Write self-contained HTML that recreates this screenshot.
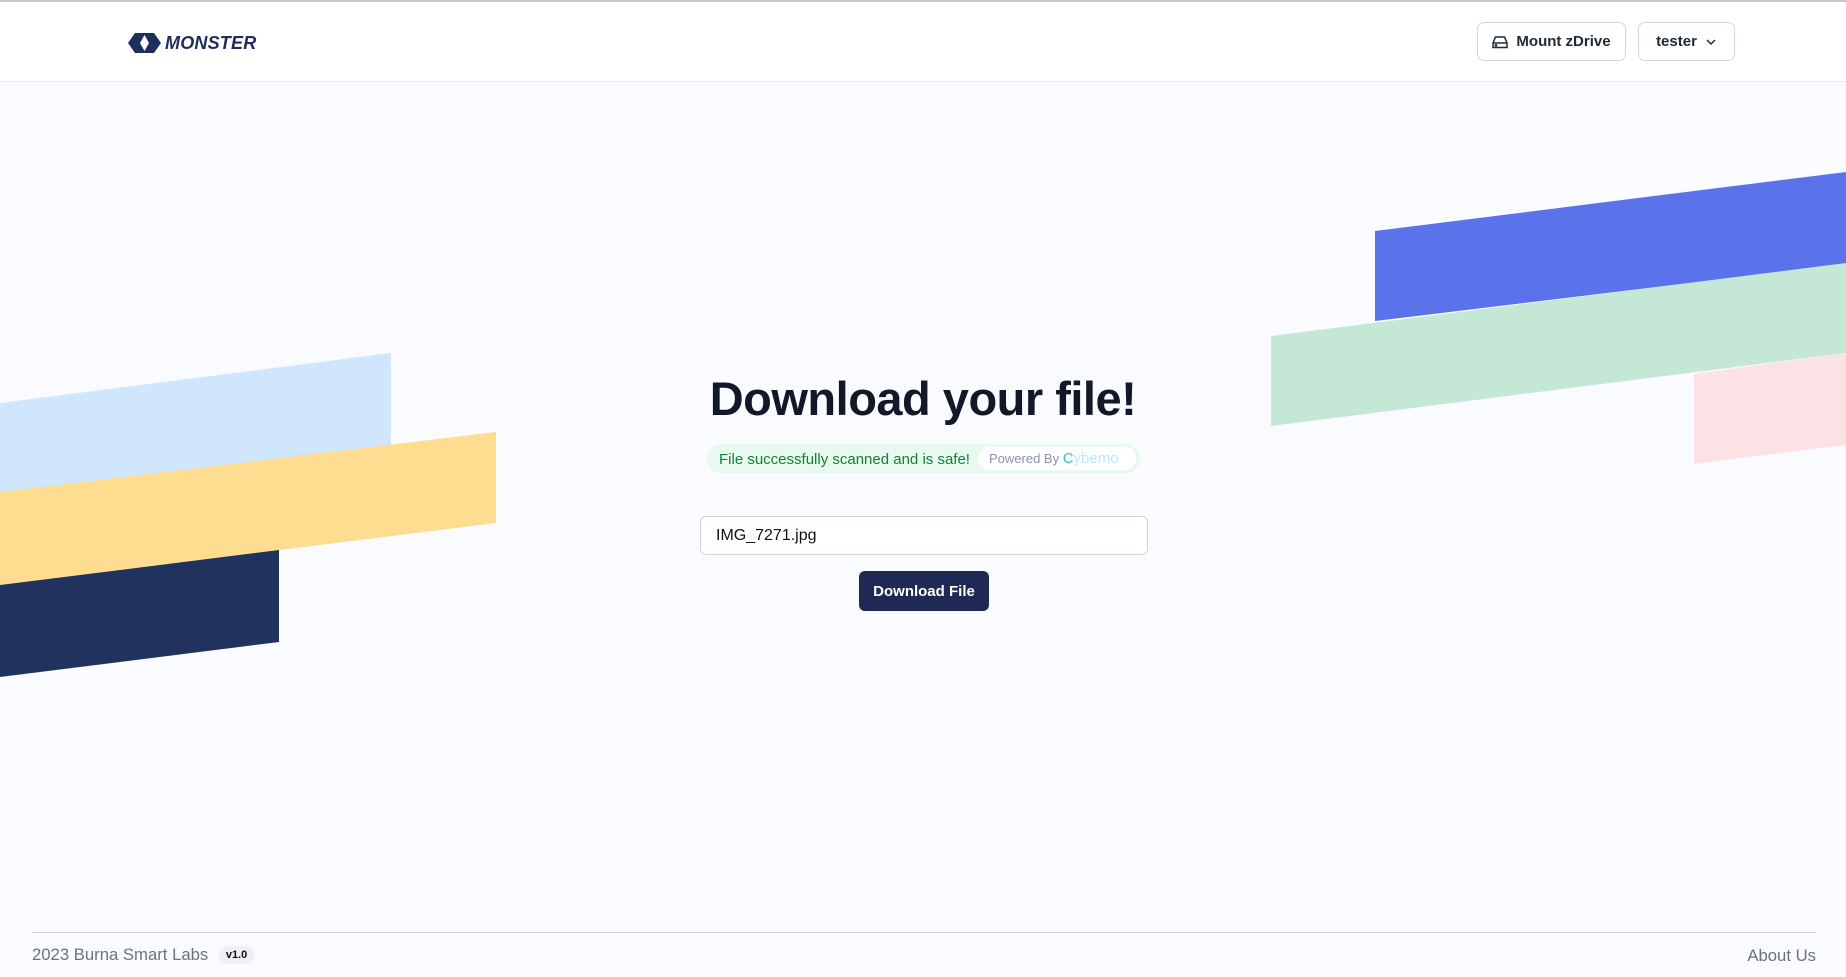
<!DOCTYPE html>
<html><head><meta charset="utf-8"><style>
body{margin:0;width:1846px;height:977px;background:#fafbfe;font-family:"Liberation Sans",sans-serif;position:relative;overflow:hidden}
.top{position:absolute;left:0;top:0;width:1846px;height:82px;background:#fff;border-top:2px solid #c8c8c8;border-bottom:1px solid #eceef3;box-sizing:border-box}
.btn{position:absolute;top:20px;height:39px;border:1px solid #d3d6de;border-radius:7px;background:#fff;box-sizing:border-box;font-weight:bold;font-size:15px;color:#1f2937;display:flex;align-items:center;justify-content:center;gap:8px}
svg.bg{position:absolute;left:0;top:0}
</style></head><body>
<svg class="bg" width="1846" height="977">
<polygon points="0,403 391,353 391,445 0,494" fill="#cfe6fc"/>
<polygon points="0,492 496,432 496,523 0,585" fill="#fedc90"/>
<polygon points="0,585 279,550 279,642 0,677" fill="#22325e"/>
<polygon points="1375,231 1846,172 1846,264 1375,321" fill="#5b73ea"/>
<polygon points="1694,374 1846,353 1846,445 1694,464" fill="#fde2e5"/>
<polygon points="1271,336 1846,263 1846,353 1271,426" fill="#c5e8d6"/>
</svg>
<div class="top">
<svg style="position:absolute;left:128px;top:31px" width="33" height="20" viewBox="0 0 33 20"><path d="M7 0 H26 L33 10 L26 20 H7 L0 10 Z M16.5 2 L12 10 L16.5 18 L21 10 Z" fill="#1f2d5a" fill-rule="evenodd"/></svg>
<div style="position:absolute;left:165px;top:31px;font-weight:bold;font-style:italic;font-size:18px;color:#1f2d5a;letter-spacing:0.2px">MONSTER</div>
<div class="btn" style="left:1477px;width:149px"><svg width="16" height="14" viewBox="0 0 16 14" fill="none" stroke="#1f2937" stroke-width="1.5"><path d="M1 8 L3.5 2 H12.5 L15 8 V12.5 H1 Z M1 8 H15"/><circle cx="4" cy="10.3" r="0.6" fill="#1f2937"/></svg>Mount zDrive</div>
<div class="btn" style="left:1638px;width:97px">tester <svg width="12" height="8" viewBox="0 0 12 8" fill="none" stroke="#1f2937" stroke-width="1.5"><path d="M2 2 L6 6 L10 2"/></svg></div>
</div>
<div style="position:absolute;left:0;width:1846px;top:371px;text-align:center;font-weight:bold;font-size:47px;color:#111827;letter-spacing:-0.5px">Download your file!</div>
<div style="position:absolute;left:707px;top:444px;width:433px;height:29px;background:#e8f9ef;border-radius:15px;box-sizing:border-box">
<span style="position:absolute;left:12px;top:7px;font-size:15px;color:#15803d">File successfully scanned and is safe!</span>
<div style="position:absolute;left:271px;top:3px;width:158px;height:23px;background:#fff;border-radius:12px;font-size:13px;color:#8a93a3;line-height:23px;padding-left:11px;box-sizing:border-box">Powered By <span style="color:#b9e9f3;font-size:15px"><span style="color:#2ec9b5">C</span>ybemo</span></div>
</div>
<div style="position:absolute;left:700px;top:516px;width:448px;height:39px;background:#fff;border:1px solid #d1d5db;border-radius:6px;box-sizing:border-box;font-size:16px;color:#111;line-height:38px;padding-left:15px">IMG_7271.jpg</div>
<div style="position:absolute;left:859px;top:571px;width:130px;height:40px;background:#1f2a54;border-radius:6px;color:#fff;font-weight:bold;font-size:15px;text-align:center;line-height:41px">Download File</div>
<div style="position:absolute;left:32px;top:932px;width:1784px;height:1px;background:#d1d5db"></div>
<div style="position:absolute;left:32px;top:945px;font-size:16.7px;color:#6b7280">2023 Burna Smart Labs <span style="display:inline-block;background:#eef0f3;border-radius:8px;font-size:11px;color:#111;padding:3px 7px;font-weight:bold;margin-left:6px;vertical-align:2px">v1.0</span></div>
<div style="position:absolute;right:30px;top:946px;font-size:16.7px;color:#6b7280">About Us</div>
</body></html>
